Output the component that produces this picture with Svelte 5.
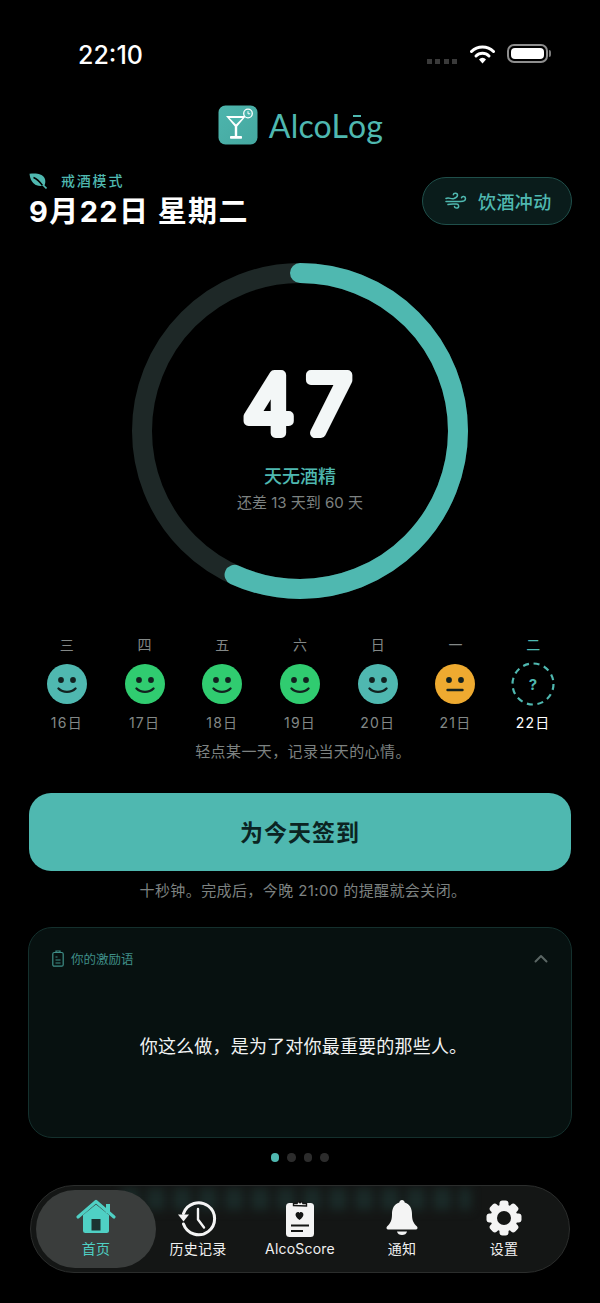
<script>
  const days = [
    { w: "三", d: "16日", mood: "good", color: "#4fb8b0" },
    { w: "四", d: "17日", mood: "good", color: "#30cc70" },
    { w: "五", d: "18日", mood: "good", color: "#30cc70" },
    { w: "六", d: "19日", mood: "good", color: "#30cc70" },
    { w: "日", d: "20日", mood: "good", color: "#4fb8b0" },
    { w: "一", d: "21日", mood: "meh", color: "#eeaa30" },
    { w: "二", d: "22日", mood: "today", color: "#4fb8b0" },
  ];
  const tabs = ["首页", "历史记录", "AlcoScore", "通知", "设置"];
  const teeth = [0, 45, 90, 135, 180, 225, 270, 315];
  const progress = 56.8;
</script>

<main class="page">
  <header class="status">
    <span class="time">22:10</span>
    <div class="status-right">
      <div class="signal"><i></i><i></i><i></i><i></i></div>
      <svg class="wifi" width="25" height="20" viewBox="0 0 25 20">
        <path d="M1.500 7.500a15.500 15.500 0 0 1 22 0" fill="none" stroke="#fff" stroke-width="3" stroke-linecap="round" />
        <path d="M6 12a9.200 9.200 0 0 1 13 0" fill="none" stroke="#fff" stroke-width="3" stroke-linecap="round" />
        <path d="M9 15.500a4.500 4.500 0 0 1 7 0L12.500 19.500z" fill="#fff" />
      </svg>
      <div class="battery"><b></b></div>
      <span class="nub"></span>
    </div>
  </header>

  <div class="brand">
    <svg class="logo" width="40" height="40" viewBox="0 0 40 40">
      <defs>
        <linearGradient id="lg" x1="0" y1="0" x2="1" y2="1">
          <stop offset="0" stop-color="#4db5ad" />
          <stop offset="1" stop-color="#45a8a0" />
        </linearGradient>
      </defs>
      <rect x="0.500" y="0.500" width="39" height="39" rx="7" fill="url(#lg)" />
      <path d="M8 11h20L19.200 21.500V31h-2.400V21.500z" fill="#fff" />
      <path d="M11.500 13h13l-6.500 6.500z" fill="#4db5ad" />
      <rect x="12" y="31" width="12" height="2.800" rx="0.800" fill="#fff" />
      <circle cx="30" cy="8.500" r="4.300" fill="#4db5ad" stroke="#fff" stroke-width="1.300" />
      <path d="M30 6.200v2.600h2.200" fill="none" stroke="#fff" stroke-width="1" />
    </svg>
    <span class="brand-name">AlcoL<span class="brand-o">o</span>g</span>
  </div>

  <section class="head">
    <div>
      <div class="mode">
        <svg width="18" height="16" viewBox="0 0 18 16">
          <path d="M0.500 0.800C6 0 12.500 0 15.500 5c1.200 2.300 1 5 0 7.500C8 14.500 1.500 11 0.500 0.800z" fill="#4fb8b0" />
          <path d="M4.500 4.500c3.500 1.500 6.500 4.500 9 8" fill="none" stroke="#000" stroke-width="1.400" />
          <path d="M14 12l3.500 3.500" fill="none" stroke="#4fb8b0" stroke-width="1.600" />
        </svg>
        <span>戒酒模式</span>
      </div>
      <h1>9月22日 星期二</h1>
    </div>
    <button class="urge">
      <svg width="22" height="18" viewBox="0 0 22 18" fill="none" stroke="#4fb8b0" stroke-width="1.500" stroke-linecap="round">
        <path d="M1 6.500c3 -1.500 5 1 8 0c2 -0.700 3.500 -1.600 3.500 -3.200c0 -2.600 -4 -2.600 -4.200 -0.500" />
        <path d="M1 9.500h14.500c2 0 5 -0.500 5 -3c0 -2.500 -3.500 -2.600 -4 -0.800" />
        <path d="M3 12.500c3 -1 6 -0.500 8.500 -0.500c2.500 0 3 3.500 0.500 4c-1.500 0.200 -2.500 -0.600 -2.500 -1.500" />
      </svg>
      <span>饮酒冲动</span>
    </button>
  </section>

  <section class="ring">
    <svg width="336" height="336" viewBox="0 0 336 336">
      <circle cx="168" cy="168" r="158" fill="none" stroke="#1e2827" stroke-width="20" />
      <circle
        cx="168"
        cy="168"
        r="158"
        fill="none"
        stroke="#4fb8b0"
        stroke-width="20"
        stroke-linecap="round"
        pathLength="100"
        stroke-dasharray="{progress} 100"
        transform="rotate(-90 168 168)" />
      <text class="count" x="172" y="170" text-anchor="middle">47</text>
    </svg>
    <div class="ring-text">
      <div class="free">天无酒精</div>
      <div class="left">还差 13 天到 60 天</div>
    </div>
  </section>

  <section class="week">
    {#each days as day}
      <div class="day" class:today={day.mood === "today"}>
        <span class="wd">{day.w}</span>
        {#if day.mood === "today"}
          <svg class="unknown" width="44" height="44" viewBox="0 0 44 44">
            <circle cx="22" cy="22" r="20.500" fill="none" stroke="#4fb8b0" stroke-width="2.200" stroke-dasharray="6 4.730" />
            <text x="22" y="27.500" text-anchor="middle">?</text>
          </svg>
        {:else}
          <svg width="40" height="40" viewBox="0 0 40 40">
            <circle cx="20" cy="20" r="20" fill={day.color} />
            <circle cx="14" cy="16" r="2.900" fill="#12211f" />
            <circle cx="26" cy="16" r="2.900" fill="#12211f" />
            {#if day.mood === "good"}
              <path d="M11.500 24.500c4.500 4.500 12.500 4.500 17 0" fill="none" stroke="#12211f" stroke-width="2.400" stroke-linecap="round" />
            {:else}
              <path d="M12.500 26h15" fill="none" stroke="#12211f" stroke-width="2.400" stroke-linecap="round" />
            {/if}
          </svg>
        {/if}
        <span class="dd">{day.d}</span>
      </div>
    {/each}
  </section>
  <p class="hint week-hint">轻点某一天，记录当天的心情。</p>

  <button class="checkin">为今天签到</button>
  <p class="hint">十秒钟。完成后，今晚 21:00 的提醒就会关闭。</p>

  <section class="card">
    <div class="card-head">
      <svg width="12" height="17" viewBox="0 0 12 17" fill="none" stroke="#3f8f88" stroke-width="1.200">
        <rect x="0.800" y="2.500" width="10.400" height="13.700" rx="1.500" />
        <path d="M4 2.500V1h4v1.500M3.500 7h2M3.500 10h5M3.500 13h5" />
      </svg>
      <span>你的激励语</span>
      <svg class="chev" width="14" height="9" viewBox="0 0 14 9">
        <path d="M1.500 7.500L7 2l5.500 5.500" fill="none" stroke="#5b6664" stroke-width="2" stroke-linecap="round" stroke-linejoin="round" />
      </svg>
    </div>
    <p class="quote">你这么做，是为了对你最重要的那些人。</p>
  </section>

  <div class="dots"><i class="on"></i><i></i><i></i><i></i></div>

  <nav class="nav">
    <div class="ghost"></div>
    {#each tabs as tab, i}
      <div class="tab" class:active={i === 0}>
        <svg width="44" height="40" viewBox="0 0 44 40">
          {#if i === 0}
            <path d="M9 17v15.500a2.500 2.500 0 0 0 2.500 2.500h21a2.500 2.500 0 0 0 2.500 -2.500V17L22 6.500z" fill="#4fd0c4" />
            <rect x="17.500" y="21" width="9" height="11.500" fill="#1c3331" />
            <path d="M4 19L22 3.500 40 19" fill="none" stroke="#4fd0c4" stroke-width="3.200" stroke-linecap="round" stroke-linejoin="round" />
            <rect x="32" y="6" width="4" height="9" fill="#4fd0c4" />
          {:else if i === 1}
            <path d="M7.500 15.500A16 16 0 1 1 7.500 26" fill="none" stroke="#f4f4f4" stroke-width="3" stroke-linecap="round" />
            <path d="M2 16.500h11l-5.500 7z" fill="#f4f4f4" />
            <path d="M22 11v10.500l6 8" fill="none" stroke="#f4f4f4" stroke-width="2.400" stroke-linecap="round" stroke-linejoin="round" />
          {:else if i === 2}
            <rect x="8" y="5" width="28" height="34" rx="3.500" fill="#f4f4f4" />
            <path d="M15.500 7.500V5.500h3.500a3.200 3.200 0 0 1 6 0h3.500v2.500z" fill="#f4f4f4" stroke="#141615" stroke-width="1.400" />
            <circle cx="22" cy="4.500" r="1.100" fill="#141615" />
            <path d="M21.500 22c-6 -4 -4 -8 -1.500 -8c0.800 0 1.300 0.500 1.500 1c0.200 -0.500 0.700 -1 1.500 -1c2.500 0 4.500 4 -1.500 8z" fill="#141615" />
            <path d="M13 27.500h18M13 33h12" stroke="#141615" stroke-width="1.800" />
          {:else if i === 3}
            <path d="M22 2c1.500 0 2.500 1 2.700 2.400C30 6 32 10.500 32 16c0 6 1.200 9 5 12.500 1 1.200 0.500 3 -1.200 3H8.200c-1.700 0 -2.200 -1.800 -1.200 -3C10.800 25 12 22 12 16c0 -5.500 2 -10 7.300 -11.600C19.500 3 20.500 2 22 2z" fill="#f4f4f4" />
            <path d="M17 33.500h10c-0.500 2.500 -2.500 3.500 -5 3.500s-4.500 -1 -5 -3.500z" fill="#f4f4f4" />
          {:else}
            <g fill="#f4f4f4">
              <circle cx="22" cy="20" r="13.500" />
              {#each teeth as a}
                <rect x="17.500" y="2.500" width="9" height="12" rx="3" transform="rotate({a} 22 20)" />
              {/each}
            </g>
            <circle cx="22" cy="20" r="7" fill="#141615" />
          {/if}
        </svg>
        <span>{tab}</span>
      </div>
    {/each}
  </nav>
</main>

<style>
  :global(body) {
    margin: 0;
    background: #000;
  }

  .page {
    width: 600px;
    height: 1303px;
    overflow: hidden;
    position: relative;
    background: #000;
    box-sizing: border-box;
    padding: 0 29px;
    font-family: Inter, "Noto Sans CJK SC", sans-serif;
    color: #fff;
  }

  .status {
    height: 105px;
    box-sizing: border-box;
    padding: 39px 20px 0 49px;
    display: flex;
    justify-content: space-between;
    align-items: flex-start;
  }

  .time {
    font-size: 25px;
    font-weight: 500;
    line-height: 32px;
  }

  .status-right {
    display: flex;
    align-items: center;
    height: 30px;
  }

  .signal {
    display: flex;
    gap: 3.500px;
    margin: 14px 13px 0 0;
  }

  .signal i {
    width: 5px;
    height: 5px;
    background: #3a3a3a;
  }

  .wifi {
    margin: -1px 12px 0 0;
  }

  .battery {
    width: 33px;
    height: 11px;
    margin-top: -1px;
    border: 2px solid #8e8e8e;
    border-radius: 7px;
    padding: 2px;
    box-sizing: content-box;
  }

  .battery b {
    display: block;
    width: 100%;
    height: 100%;
    background: #fff;
    border-radius: 4px;
  }

  .nub {
    width: 2px;
    height: 7px;
    margin: -1px 0 0 1px;
    background: #7a7a7a;
    border-radius: 0 2px 2px 0;
  }

  .brand {
    display: flex;
    align-items: center;
    justify-content: center;
    gap: 11px;
    height: 40px;
    margin-left: 1px;
  }

  .brand-name {
    font-family: Lato, sans-serif;
    font-size: 32px;
    font-weight: 400;
    letter-spacing: 0.2px;
    color: #4fb8b0;
  }

  .brand-o {
    position: relative;
  }

  .brand-o::before {
    content: "";
    position: absolute;
    left: 5px;
    right: 5px;
    top: 9px;
    height: 2px;
    background: #4fb8b0;
  }

  .head {
    display: flex;
    justify-content: space-between;
    align-items: flex-start;
    margin-top: 26px;
  }

  .mode {
    display: flex;
    align-items: center;
    gap: 14px;
    font-size: 14px;
    font-weight: 500;
    letter-spacing: 1.800px;
    line-height: 20px;
    color: #4fb8b0;
  }

  h1 {
    margin: 3px 0 0;
    font-size: 29px;
    line-height: 36px;
    font-weight: 700;
    letter-spacing: 1.400px;
  }

  .urge {
    display: flex;
    align-items: center;
    gap: 11px;
    width: 150px;
    height: 48px;
    margin: 6px -1px 0 0;
    padding: 0 0 0 22px;
    border: 1px solid #1f4f4a;
    border-radius: 24px;
    background: #0a1c1b;
    color: #4fb8b0;
    font-family: inherit;
    font-size: 18px;
    font-weight: 500;
    letter-spacing: 0.4px;
  }

  .ring {
    display: grid;
    justify-content: center;
    margin-top: 33px;
    height: 336px;
  }

  .ring svg,
  .ring-text {
    grid-area: 1 / 1;
  }

  .count {
    font-size: 80px;
    font-weight: 300;
    letter-spacing: 13px;
    fill: #f3f7f7;
    stroke: #f3f7f7;
    stroke-width: 10px;
    stroke-linejoin: round;
  }

  .ring-text {
    padding-top: 201px;
    text-align: center;
  }

  .free {
    font-size: 18px;
    font-weight: 500;
    line-height: 26px;
    color: #4fb8b0;
  }

  .left {
    font-size: 15px;
    line-height: 26px;
    color: #7d8281;
  }

  .week {
    display: grid;
    grid-template-columns: repeat(7, 1fr);
    margin: 36px -1px 0;
  }

  .day {
    display: flex;
    flex-direction: column;
    align-items: center;
    font-size: 14px;
    color: #838887;
  }

  .wd {
    line-height: 20px;
    font-size: 14px;
  }

  .day svg {
    margin-top: 9px;
  }

  .day svg.unknown {
    margin: 7px 0 -2px;
  }

  .unknown text {
    fill: #4fb8b0;
    font-size: 15px;
    font-weight: 700;
  }

  .dd {
    margin-top: 9px;
    line-height: 20px;
    letter-spacing: 1.200px;
  }

  .today .dd {
    color: #fff;
  }

  .today .wd {
    color: #4fb8b0;
  }

  .hint {
    margin: 10px 0 0;
    padding-left: 6px;
    text-align: center;
    font-size: 15px;
    line-height: 20px;
    letter-spacing: 0.400px;
    color: #7d8281;
  }

  .week-hint {
    margin-top: 9px;
  }

  .checkin {
    display: block;
    width: 542px;
    height: 78px;
    margin-top: 31px;
    padding: 0 0 3px;
    border: 0;
    border-radius: 22px;
    background: #4fb8b0;
    color: #0b2422;
    font-family: inherit;
    font-size: 23px;
    font-weight: 600;
    letter-spacing: 1px;
  }

  .card {
    box-sizing: border-box;
    height: 211px;
    margin: 26px 0 0 -1px;
    width: 544px;
    padding: 20px 23px;
    border: 1px solid #14302d;
    border-radius: 24px;
    background: #071110;
  }

  .card-head {
    display: flex;
    align-items: center;
    gap: 7px;
    height: 20px;
    font-size: 12.500px;
    color: #3f8f88;
  }

  .chev {
    margin-left: auto;
  }

  .quote {
    margin: 66px 0 0;
    padding-left: 7px;
    text-align: center;
    font-size: 18px;
    line-height: 26px;
    letter-spacing: 0.200px;
    color: #f0f2f2;
  }

  .dots {
    display: flex;
    justify-content: center;
    gap: 8px;
    margin: 15px 0 0 -1px;
  }

  .dots i {
    width: 8.500px;
    height: 8.500px;
    border-radius: 50%;
    background: #2c2c2c;
  }

  .dots .on {
    background: #4fb8b0;
  }

  .nav {
    position: absolute;
    left: 30px;
    top: 1185px;
    box-sizing: border-box;
    width: 540px;
    height: 88px;
    padding: 0 14px;
    display: grid;
    grid-template-columns: repeat(5, 102px);
    border: 1px solid #2b2d2c;
    border-radius: 44px;
    background: #141615;
    overflow: hidden;
  }

  .ghost {
    position: absolute;
    left: 90px;
    top: 2px;
    width: 350px;
    height: 22px;
    background: repeating-linear-gradient(90deg, #1a2a28 0 18px, #141615 18px 26px);
    filter: blur(5px);
  }

  .tab {
    position: relative;
    display: flex;
    flex-direction: column;
    align-items: center;
    padding-top: 12px;
    font-size: 14px;
    font-weight: 400;
    line-height: 20px;
    letter-spacing: 0.200px;
    color: #f0f0f0;
    white-space: nowrap;
  }

  .tab.active {
    color: #4fd0c4;
  }

  .tab.active::before {
    content: "";
    position: absolute;
    left: -9px;
    top: 4px;
    width: 120px;
    height: 78px;
    border-radius: 39px;
    background: #3a3d3c;
  }

  .tab svg,
  .tab span {
    position: relative;
  }

  .tab span {
    margin-top: 1px;
  }
</style>
